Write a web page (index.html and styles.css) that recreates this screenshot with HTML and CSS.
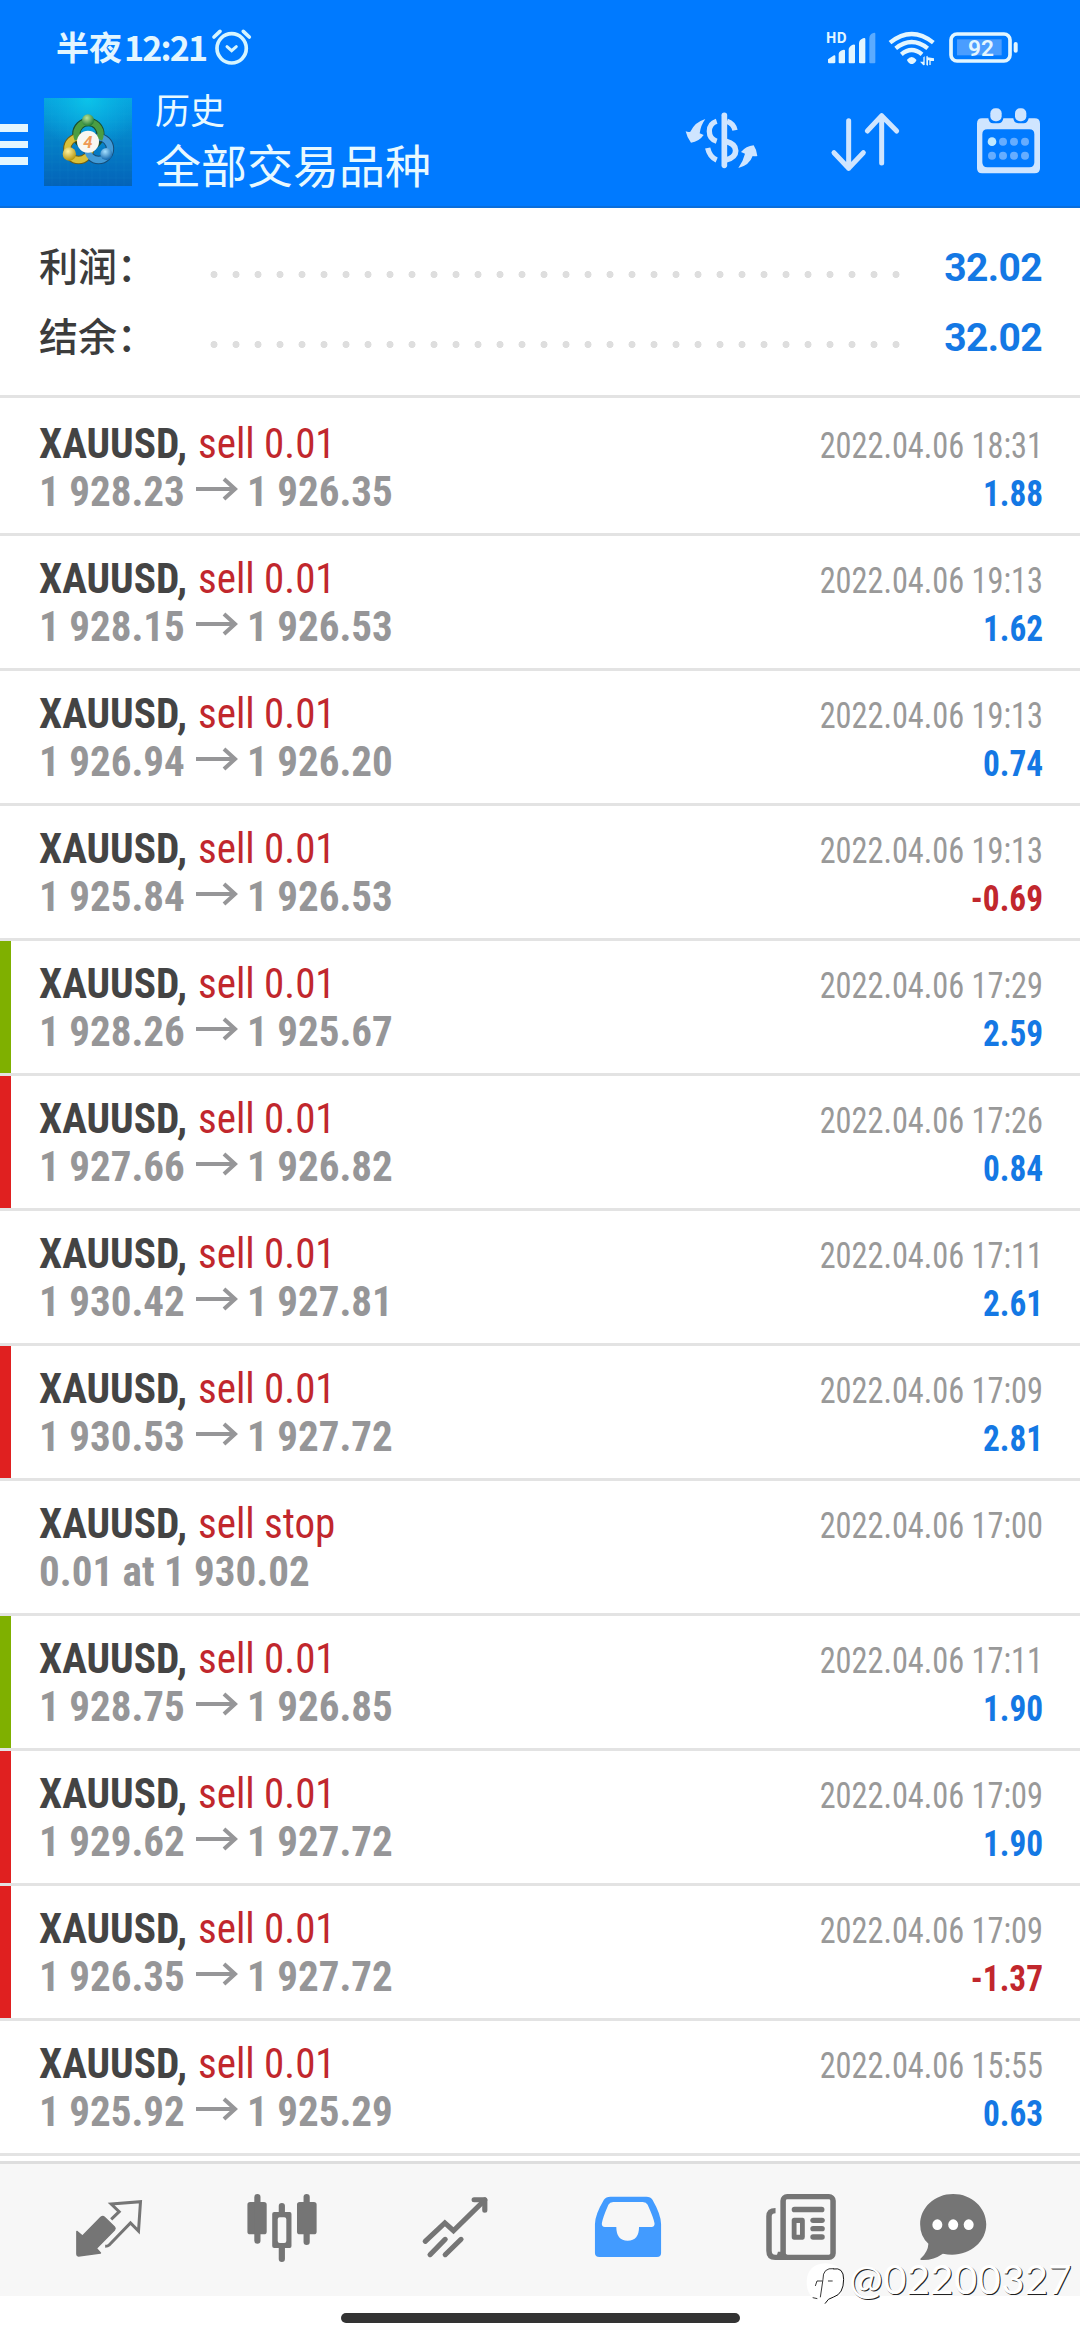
FILE: index.html
```
<!DOCTYPE html>
<html lang="zh-CN">
<head>
<meta charset="utf-8">
<title>历史</title>
<link rel="stylesheet" href="styles.css">
</head>
<body>
<header class="top">
  <div class="status">
    <div class="clock"><span class="clock-cn">半夜</span><span class="clock-num">12:21</span>
      <svg class="alarm" viewBox="630 80 130 120"><g fill="none" stroke="#d6f5ff" stroke-linecap="round"><circle cx="695" cy="144" r="44" stroke-width="11"/><path d="M681 139l14 12 14-12" stroke-width="9"/><path d="M642 110l18-17M730 93l18 17" stroke-width="11"/></g></svg>
    </div>
    <svg class="signals" viewBox="490 80 590 120">
      <g fill="#e3f6ff">
        <text x="495" y="128" class="hd">HD</text>
        <path d="M502 186v-9l18-12q4-1 4 3v18q0 3-4 3h-15q-3 0-3-3zM534 186v-25q0-8 12-12 7-2 7 2v35q0 3-3 3h-13q-3 0-3-3zM564 186v-39q0-8 12-14 7-2 7 2v51q0 3-3 3h-13q-3 0-3-3zM595 186v-57q0-10 12-15 7-2 7 2v70q0 3-3 3h-13q-3 0-3-3z"/>
        <path opacity=".4" d="M626 186v-72q0-12 12-16 6-2 6 2v86q0 3-3 3h-12q-3 0-3-3z"/>
        <path d="M739 178q14-16 28 0 1 6-11 13h-6q-11-7-11-13z"/>
        <path d="M778 184h10v-13l4-3v26l-4 1zM797 194v-26l4-2v5l19 3v8h-10v12h-4v-14h-4v16z"/>
      </g>
      <g fill="none" stroke="#e3f6ff" stroke-width="13"><path d="M688 127q65-52 130 0M705 144q48-38 96 0M722 162q31-26 62 0"/></g>
      <rect x="889" y="117" width="134" height="48" fill="#4a9dff"/>
      <rect x="871" y="101" width="177" height="81" rx="18" fill="none" stroke="#e3f6ff" stroke-width="11"/>
      <rect x="1059" y="125" width="12" height="32" rx="6" fill="#e3f6ff"/>
      <text x="961" y="167" text-anchor="middle" class="pct">92</text>
    </svg>
  </div>
  <div class="bar">
    <div class="menu"><i></i><i></i><i></i></div>
    <svg class="logo" viewBox="132 294 264 264">
      <defs>
        <linearGradient id="sky" x1="0" y1="0" x2="0" y2="1"><stop offset="0" stop-color="#06a4de"/><stop offset=".5" stop-color="#0480c8"/><stop offset="1" stop-color="#0463b8"/></linearGradient>
        <radialGradient id="glow" cx=".5" cy="0" r=".6"><stop offset="0" stop-color="#0bc4ea"/><stop offset="1" stop-color="#0bb0e4" stop-opacity="0"/></radialGradient>
        <radialGradient id="g" cx=".4" cy=".3" r=".7"><stop offset="0" stop-color="#b9e39b"/><stop offset="1" stop-color="#1c7a31"/></radialGradient>
        <radialGradient id="y" cx=".4" cy=".3" r=".7"><stop offset="0" stop-color="#fff3a0"/><stop offset="1" stop-color="#b59510"/></radialGradient>
        <radialGradient id="b" cx=".4" cy=".3" r=".7"><stop offset="0" stop-color="#a5e0ff"/><stop offset="1" stop-color="#1468ae"/></radialGradient>
      </defs>
      <path fill="url(#sky)" d="M132 294h264v264H132z"/><path fill="url(#glow)" d="M132 294h264v264H132z"/>
      <path d="M156 294v264M180 294v264M204 294v264M228 294v264M252 294v264M276 294v264M300 294v264M324 294v264M348 294v264M372 294v264M132 318h264M132 342h264M132 366h264M132 390h264M132 414h264M132 438h264M132 462h264M132 486h264M132 510h264M132 534h264" stroke="#3bbcf0" stroke-opacity=".2" fill="none"/>
      <g fill="none" stroke-width="25"><circle cx="265" cy="402" r="36" stroke="#194f32"/><circle cx="236" cy="446" r="34" stroke="#715e12"/><circle cx="296" cy="446" r="34" stroke="#174d77"/></g>
      <g fill="none" stroke-width="19"><circle cx="236" cy="446" r="34" stroke="#d9c03a"/><circle cx="296" cy="446" r="34" stroke="#439bd7"/><path d="M233 418a36 36 0 1 1 65 0" stroke="#4b9d43"/></g>
      <circle cx="264" cy="361" r="18" fill="url(#g)"/><circle cx="208" cy="462" r="20" fill="url(#y)"/><circle cx="319" cy="462" r="18" fill="url(#b)"/>
      <circle cx="264" cy="425" r="33" fill="#f8f7f2"/><text x="264" y="443" text-anchor="middle" class="four">4</text>
    </svg>
    <div class="titles"><div class="t1">历史</div><div class="t2">全部交易品种</div></div>
    <div class="actions">
      <svg class="act a1" viewBox="70 320 240 210"><g fill="#cfe5ff"><path d="M78 393q8 3 14 1 14-29 45-38-14 19-17 43l12 5q-14 20-38 23-12-15-16-34z"/><path d="M293 467q-7 2-14 0-10 28-43 36 14-19 20-43l-12-5q15-18 38-20 9 13 11 32z"/></g><g fill="none" stroke="#cfe5ff" stroke-width="17"><path d="M194 345v150" stroke-linecap="round"/><path d="M171 363Q149 370 149 393T171 423M144 443Q150 470 171 479M202 363Q222 370 226 390" stroke-width="16"/><path d="M198 423q30 8 30 28t-30 28"/></g></svg>
      <svg class="act a2" viewBox="500 320 240 210"><path d="M565 361v143M521 457l44 47 44-47M664 488V346M621 392l43-46 45 46" fill="none" stroke="#cfe5ff" stroke-width="15" stroke-linecap="round" stroke-linejoin="round"/></svg>
      <svg class="act a3" viewBox="930 320 240 210"><path fill="#cfe5ff" fill-rule="evenodd" d="M966 354h19q2 15 14 15h16q13 0 15-15h30q2 15 15 15h16q12 0 15-15h18q16 0 16 16v134q0 15-16 15H966q-15 0-15-15V370q0-16 15-16zM982 387q-15 0-15 15v84q0 15 15 15h126q15 0 15-15v-84q0-15-15-15z"/><rect x="991" y="324" width="34" height="39" rx="15" fill="#cfe5ff"/><rect x="1065" y="324" width="34" height="39" rx="15" fill="#cfe5ff"/><g fill="#66adff"><circle cx="996" cy="424" r="13" fill="#bfe9ff"/><circle cx="1029" cy="424" r="12"/><circle cx="1062" cy="424" r="12"/><circle cx="1095" cy="424" r="12"/><circle cx="996" cy="466" r="12"/><circle cx="1029" cy="466" r="12"/><circle cx="1062" cy="466" r="12"/><circle cx="1095" cy="466" r="12"/></g></svg>
    </div>
  </div>
</header>
<section class="summary">
  <div class="sum"><span class="lbl">利润：</span><span class="dots"></span><b>32.02</b></div>
  <div class="sum"><span class="lbl">结余：</span><span class="dots"></span><b>32.02</b></div>
</section>
<main class="list" id="list"></main>
<nav class="tabs">
  <span class="tab"><svg viewBox="25.5 45 240 240"><path fill="#757575" stroke="#757575" stroke-width="4" stroke-linejoin="round" d="M49 184l17 14 55-56q6-5 11 0l30 29q4 4 0 9l-54 55 12 14-66 9q-5 0-5-5z"/><path fill="none" stroke="#757575" stroke-width="9" d="M152 148l24-23-24-23 88-7-6 88-24-24-64 66q-4 4-12 4"/></svg></span>
  <span class="tab"><svg viewBox="700.3 135 232.3 240" preserveAspectRatio="none"><g fill="#757575"><rect x="716" y="186" width="56" height="97" rx="8"/><rect x="736" y="162" width="18" height="149" rx="9"/><rect x="860" y="186" width="57" height="97" rx="8"/><rect x="879" y="162" width="18" height="153" rx="9"/><rect x="807" y="189" width="18" height="40" rx="9"/><rect x="807" y="315" width="18" height="51" rx="9"/><path fill-rule="evenodd" d="M794 216h45q5 0 5 6v96q0 6-5 6h-45q-6 0-6-6v-96q0-6 6-6zM810 232q-6 0-6 6v65q0 6 6 6h13q6 0 6-6v-65q0-6-6-6z"/></g></svg></span>
  <span class="tab"><svg viewBox="1202.3 135 232.3 240" preserveAspectRatio="none"><g fill="none" stroke="#757575" stroke-width="15" stroke-linecap="round"><path d="M1232 304l57-55 25 23 91-92"/><path d="M1374 179h31v32" stroke-linejoin="round"/><path d="M1246 344l44-46M1290 344l46-46"/></g></svg></span>
  <span class="tab"><svg viewBox="137.8 135 232.3 240" preserveAspectRatio="none"><path fill="#429bff" fill-rule="evenodd" d="M203 170h104q13 0 18 9 25 45 25 73v87q0 12-12 12H171q-13 0-13-12v-87q0-28 26-73 6-9 19-9zM211 186q-10 0-14 8-17 40-19 56-1 11 9 11h33q0 41 33 41t33-41h36q10 0 9-11-2-15-20-56-4-8-14-8z"/></svg></span>
  <span class="tab"><svg viewBox="641.8 135 232.3 240" preserveAspectRatio="none"><g fill="none" stroke="#757575" stroke-width="16"><rect x="706" y="170" width="145" height="182" rx="12"/><path d="M684 212q-19 0-19 17v103q0 20 18 20h35"/></g><g fill="#757575"><path d="M691 335h14v14h-18z"/><rect x="731" y="200" width="95" height="17" rx="8"/><rect x="785" y="233" width="42" height="16" rx="8"/><rect x="785" y="258" width="42" height="16" rx="8"/><rect x="785" y="283" width="42" height="16" rx="8"/><path fill-rule="evenodd" d="M738 233h25q6 0 6 8v50q0 8-6 8h-25q-7 0-7-8v-50q0-8 7-8zM745 249v35h10v-35z"/></g></svg></span>
  <span class="tab last"><svg viewBox="1082.3 135 232.3 240" preserveAspectRatio="none"><path fill="#757575" d="M1199 162c54 0 96 41 96 91 0 59-60 104-126 88q-29 21-62 19-7-1-1-6 20-20 21-43-24-21-24-58c0-50 42-91 96-91z"/><g fill="#fff"><ellipse cx="1153" cy="254" rx="14.500" ry="16"/><ellipse cx="1199" cy="254" rx="14.500" ry="16"/><ellipse cx="1244" cy="254" rx="14.500" ry="16"/></g></svg></span>
</nav>
<footer class="gesture"><i></i></footer>
<div class="mark"><svg viewBox="15 280 124 130"><path fill="#fff" d="M76 281q56 2 56 56 0 46-35 56l-24 12-2-11q-51-4-51-56 0-54 56-57z"/><path d="M100 298q31-6 31 31 0 44-30 53-18 4-26 20" fill="none" stroke="#111" stroke-width="3"/><path d="M102 297q-34-4-33 32l-8 54M46 349l5-15h16M84 334h14M38 384l14 3" fill="none" stroke="#111" stroke-width="2.500"/></svg><span>@02200327</span></div>
<script src="app.js"></script>
</body>
</html>
```
FILE: styles.css
```
*{box-sizing:border-box}
body{margin:0;width:1080px;height:2340px;background:#fff;overflow:hidden;position:relative;display:flex;flex-direction:column;font-family:"Roboto Condensed",Roboto,"Noto Sans CJK SC",sans-serif}
svg{display:block;overflow:visible}
.top{height:208px;background:#007aff;border-bottom:2px solid #0a6edb;flex:none}
.status{height:90px;display:flex;justify-content:space-between;padding:0 59px 0 56px}
.clock{display:flex;height:90px;color:#e3f6ff;line-height:93px;font-weight:700;font-family:"Noto Sans CJK SC",sans-serif}
.clock-cn{font-size:33px;width:68px}
.clock-num{font-size:34px;letter-spacing:-1.800px;width:86px}
.alarm{width:43.300px;height:40px;margin-top:27px}
.signals{width:196.700px;height:40px;margin-top:27px}
.hd{font:700 43px "Noto Sans CJK SC",sans-serif}
.pct{font:600 68px Roboto,sans-serif;fill:#e3f6ff}
.four{font:italic 700 50px Roboto,sans-serif;fill:#ee9a55}
.bar{height:116px;display:flex}
.menu{width:28px;padding-top:34px;display:flex;flex-direction:column;gap:9px}
.menu i{height:7.500px;background:#e3f6ff}
.logo{width:88px;height:88px;margin:8px 0 0 16px}
.titles{margin:-3px 0 0 23px;color:#e8f9ff;font-family:"Noto Sans CJK SC",sans-serif;width:400px}
.t1{font-size:35px;line-height:44px}
.t2{font-size:46px;line-height:56px;margin-top:4px}
.actions{display:flex;gap:63.300px;padding:16.700px 0 0 128.300px}
.act{width:80px;height:70px}
.summary{height:193px;flex:none;padding:28px 38px 0 39px;border-bottom:3px solid #e3e3e3;margin-top:-3px}
.sum{height:70px;display:flex;align-items:center}
.lbl{font:500 39px/70px "Noto Sans CJK SC",sans-serif;color:#3c3c3c;width:164px;height:78px}
.dots{width:704px;height:7px;margin-top:12px;background:radial-gradient(circle at 11px 3.500px,#dedede 3.200px,transparent 3.800px) 0 0/22px 7px}
.sum b{margin-left:auto;font:700 39px/70px Roboto,sans-serif;letter-spacing:-.6px;color:#1478e4}
.list{padding-top:3px;flex:none}
.row{height:135px;border-bottom:3px solid #e3e3e3;padding:18px 37px 0 39px;position:relative}
.row.g::before,.row.r::before{content:"";position:absolute;left:0;top:0;bottom:0;width:11px;background:#7fb000}
.row.r::before{background:#e02020}
.line{display:flex;justify-content:space-between;align-items:baseline;height:48px;line-height:48px;font-size:43px;font-stretch:75%;white-space:pre}
.left{display:flex;align-items:baseline}
.sym,.op,.price{transform-origin:0 50%}
.date,.pl{transform-origin:100% 50%}
.sym{font-weight:700;color:#444;width:159px;transform:scaleX(.962)}
.op{color:#c1272d;transform:scaleX(.953)}
.price{font-weight:700;color:#969698;width:156.700px;transform:scaleX(.954)}
.arr{width:42px;height:22px;margin-right:9.300px;align-self:center;transform:translateY(-2px)}
.date{font-size:36px;color:#999;transform:scaleX(.897)}
.pl{font-size:36px;font-weight:700;color:#1478e4;transform:scaleX(.925)}
.pl.neg{color:#c1272d}
.tabs{margin-top:5px;height:135px;background:#f7f7f7;border-top:3px solid #dedede;display:flex;padding:21px 0 0 22px;flex:none}
.tab{width:173.100px;display:flex;justify-content:center}
.tab.last{width:130.500px}
.tab svg{width:80px;height:80px}
.gesture{padding-top:17px;display:flex;justify-content:center}
.gesture i{width:399px;height:10px;border-radius:5px;background:#333}
.mark{position:absolute;left:805px;top:2263px;display:flex}
.mark svg{width:41.300px;height:43.300px}
.mark span{margin:-8px 0 0 3px;font:400 40px/48px Lato,sans-serif;letter-spacing:.4px;color:#fff;text-shadow:1px 1px 0 #222}
```
FILE: app.js
```
const trades = [
  ["", "1 928.23", "1 926.35", "18:31", "1.88"],
  ["", "1 928.15", "1 926.53", "19:13", "1.62"],
  ["", "1 926.94", "1 926.20", "19:13", "0.74"],
  ["", "1 925.84", "1 926.53", "19:13", "-0.69"],
  ["g", "1 928.26", "1 925.67", "17:29", "2.59"],
  ["r", "1 927.66", "1 926.82", "17:26", "0.84"],
  ["", "1 930.42", "1 927.81", "17:11", "2.61"],
  ["r", "1 930.53", "1 927.72", "17:09", "2.81"],
  ["", "0.01 at 1 930.02", null, "17:00", ""],
  ["g", "1 928.75", "1 926.85", "17:11", "1.90"],
  ["r", "1 929.62", "1 927.72", "17:09", "1.90"],
  ["r", "1 926.35", "1 927.72", "17:09", "-1.37"],
  ["", "1 925.92", "1 925.29", "15:55", "0.63"]
];
const arrow = '<svg class="arr" viewBox="0 0 42 22"><path d="M0 11h38M28 1l11 10-11 10" fill="none" stroke="#969698" stroke-width="4"/></svg>';
document.getElementById("list").innerHTML = trades.map(([mark, from, to, time, pl]) => `
<div class="row ${mark}">
  <div class="line"><span class="left"><span class="sym">XAUUSD,</span><span class="op">${to ? "sell 0.01" : "sell stop"}</span></span><span class="date">2022.04.06 ${time}</span></div>
  <div class="line"><span class="left"><span class="price">${from}</span>${to ? arrow + `<span class="price">${to}</span>` : ""}</span><span class="pl ${pl[0] === "-" ? "neg" : ""}">${pl}</span></div>
</div>`).join("");
```
